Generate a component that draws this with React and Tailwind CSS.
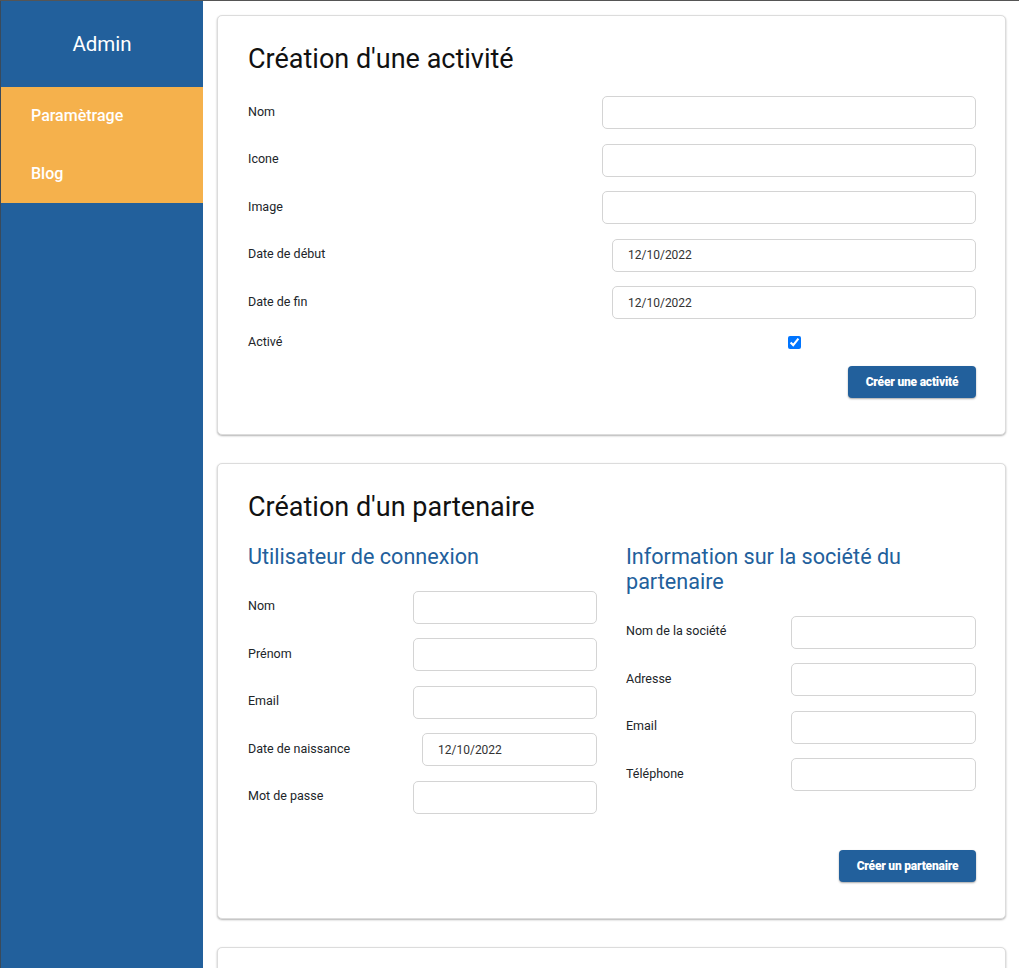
import React from "react";

const font = { fontFamily: "Roboto, 'Liberation Sans', sans-serif" };

function Field({ label, width, date = false }) {
    return (
        <div className="flex items-center justify-between h-[33px]">
            <label className="text-[12.5px] text-[#212529] -mt-px">{label}</label>
            {date ? (
                <input
                    type="text"
                    defaultValue="12/10/2022"
                    className={`${width} h-[33px] rounded-[5px] border border-[#d4d4d4] bg-white pl-[15px] text-[12px] text-[#333] outline-none`}/>
            ) : (
                <input
                    type="text"
                    className={`${width} h-[33px] rounded-[5px] border border-[#d4d4d4] bg-white outline-none`}/>
            )}
        </div>
    );
}

function Card({ children, className = "" }) {
    return (
        <div className={`bg-white border border-[#dcdcdc] rounded-[5px] shadow-[0_1px_2px_rgba(0,0,0,0.3)] ${className}`}>
            {children}
        </div>
    );
}

export default function App() {
    return (
        <div className="flex h-screen overflow-hidden border-t border-[#555] bg-white" style={font}>
            {/* sidebar */}
            <aside className="w-[203px] shrink-0 bg-[#22609c] border-l border-[#3a4a5a]">
                <div className="h-[86px] flex items-center justify-center text-white text-[20.5px]">Admin</div>
                <nav className="bg-[#f5b14c]">
                    <div className="h-[58px] flex items-center px-[30px] text-white text-[16px] font-medium">Paramètrage</div>
                    <div className="h-[58px] flex items-center px-[30px] text-white text-[16px] font-medium">Blog</div>
                </nav>
            </aside>

            {/* main */}
            <main className="flex-1 pl-[14px] pr-[13px] pt-[14px] flex flex-col gap-[28px]">
                <Card className="pl-[30px] pr-[29px] pt-[28px] pb-[36px]">
                    <h1 className="text-[27px] leading-[31px] text-[#111] mb-[21px]">Création d'une activité</h1>
                    <div className="flex flex-col gap-[14.5px]">
                        <Field label="Nom" width="w-[374px]"/>
                        <Field label="Icone" width="w-[374px]"/>
                        <Field label="Image" width="w-[374px]"/>
                        <Field label="Date de début" width="w-[364px]" date/>
                        <Field label="Date de fin" width="w-[364px]" date/>
                        <div className="flex items-center h-[18px]">
                            <label className="text-[12.5px] text-[#212529] w-1/2 -mt-px">Activé</label>
                            <div className="w-1/2 flex justify-center">
                                <input type="checkbox" defaultChecked className="w-[13px] h-[13px]"/>
                            </div>
                        </div>
                    </div>
                    <div className="flex justify-end mt-[14px]">
                        <button className="h-[32px] w-[128px] rounded-[4px] bg-[#22609c] text-white text-[12px] font-black tracking-[-0.2px] shadow-[0_1px_2px_rgba(0,0,0,0.35)]">
                            Créer une activité
                        </button>
                    </div>
                </Card>

                <Card className="pl-[30px] pr-[29px] pt-[28px] pb-[36px]">
                    <h1 className="text-[27px] leading-[31px] text-[#111] mb-[21px]">Création d'un partenaire</h1>
                    <div className="grid grid-cols-[349px_1fr] gap-[29px]">
                        <div>
                            <h2 className="text-[21.6px] leading-[25px] text-[#22609c] mb-[22px]">Utilisateur de connexion</h2>
                            <div className="flex flex-col gap-[14.5px]">
                                <Field label="Nom" width="w-[184px]"/>
                                <Field label="Prénom" width="w-[184px]"/>
                                <Field label="Email" width="w-[184px]"/>
                                <Field label="Date de naissance" width="w-[175px]" date/>
                                <Field label="Mot de passe" width="w-[184px]"/>
                            </div>
                        </div>
                        <div>
                            <h2 className="text-[21.6px] leading-[25px] text-[#22609c] mb-[22px]">Information sur la société du partenaire</h2>
                            <div className="flex flex-col gap-[14.5px]">
                                <Field label="Nom de la société" width="w-[185px]"/>
                                <Field label="Adresse" width="w-[185px]"/>
                                <Field label="Email" width="w-[185px]"/>
                                <Field label="Téléphone" width="w-[185px]"/>
                            </div>
                        </div>
                    </div>
                    <div className="flex justify-end mt-[36px]">
                        <button className="h-[32px] w-[137px] rounded-[4px] bg-[#22609c] text-white text-[12px] font-black tracking-[-0.2px] shadow-[0_1px_2px_rgba(0,0,0,0.35)]">
                            Créer un partenaire
                        </button>
                    </div>
                </Card>

                <Card className="h-[200px] shrink-0"/>
            </main>
        </div>
    );
}
